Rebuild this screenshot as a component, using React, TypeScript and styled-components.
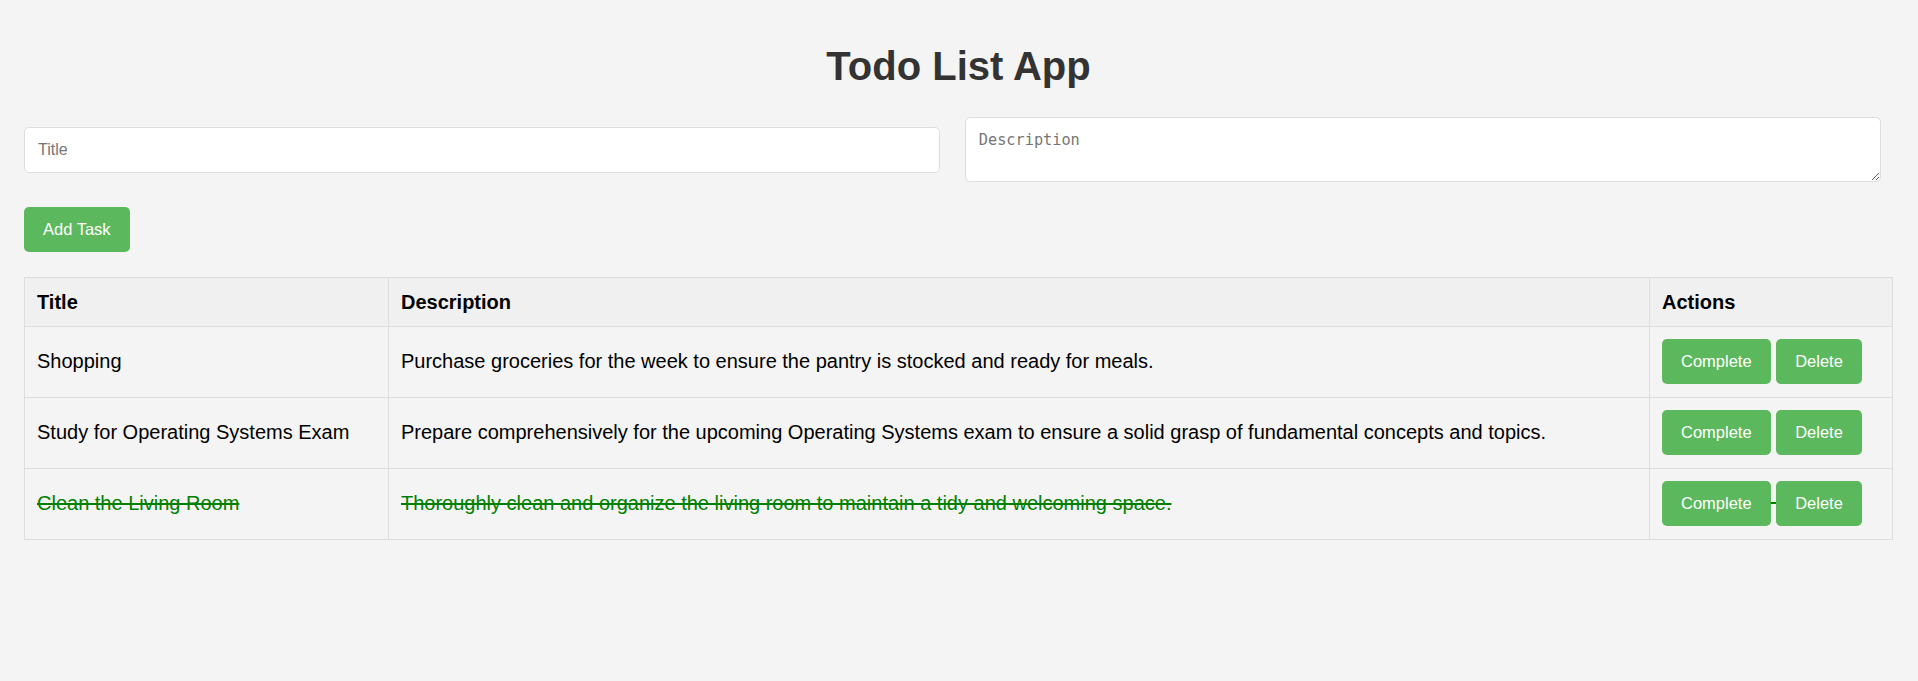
import React, { useState } from "react";
import styled, { createGlobalStyle } from "styled-components";

const GlobalStyle = createGlobalStyle`
  html, body {
    margin: 0;
    padding: 0;
    background: #f4f4f4;
  }
  body {
    font-family: "Liberation Sans", Arial, sans-serif;
    color: #000;
  }
`;

const Container = styled.div`
  padding: 24px 25px 24px 24px;
`;

const Heading = styled.h1`
  margin: 20px 0 29px;
  text-align: center;
  font-size: 40px;
  line-height: 44px;
  font-weight: bold;
  color: #333;
`;

const Form = styled.div`
  display: flex;
  align-items: center;
  gap: 25px;
`;

const TitleInput = styled.input`
  box-sizing: border-box;
  width: 49%;
  height: 46px;
  padding: 0 13px;
  border: 1px solid #ddd;
  border-radius: 5px;
  background: #fff;
  font-family: "Liberation Sans", Arial, sans-serif;
  font-size: 16px;
  outline: none;
  &::placeholder {
    color: #757575;
  }
`;

const DescArea = styled.textarea`
  box-sizing: border-box;
  width: 49%;
  height: 65px;
  padding: 13px;
  border: 1px solid #ddd;
  border-radius: 5px;
  background: #fff;
  font-family: "DejaVu Sans Mono", monospace;
  font-size: 15.25px;
  outline: none;
  &::placeholder {
    color: #757575;
  }
`;

const GreenButton = styled.button`
  display: inline-block;
  padding: 13px 19px;
  border: none;
  border-radius: 5px;
  background: #5cb85c;
  color: #fff;
  font-family: "Liberation Sans", Arial, sans-serif;
  font-size: 16.5px;
  line-height: 19px;
  cursor: pointer;
  text-decoration: none;
`;

const AddButton = styled(GreenButton)`
  margin-top: 25px;
  padding: 13px 19px;
`;

const Table = styled.table`
  margin-top: 25px;
  width: 100%;
  border-collapse: collapse;
  table-layout: fixed;
`;

const Col = styled.col<{ $w?: string }>`
  width: ${(p) => p.$w ?? "auto"};
`;

const HeadCell = styled.th`
  padding: 12px;
  border: 1px solid #ddd;
  background: #f0f0f0;
  text-align: left;
  font-size: 20px;
  font-weight: bold;
  line-height: 24px;
`;

const Cell = styled.td<{ $done?: boolean }>`
  padding: 12px 12px 13px;
  border: 1px solid #ddd;
  font-size: 20px;
  line-height: 23px;
  vertical-align: middle;
  color: ${(p) => (p.$done ? "#008000" : "#000")};
  text-decoration: ${(p) => (p.$done ? "line-through" : "none")};
`;

type Task = { id: number; title: string; description: string; done: boolean };

const initial: Task[] = [
  {
    id: 1,
    title: "Shopping",
    description:
      "Purchase groceries for the week to ensure the pantry is stocked and ready for meals.",
    done: false,
  },
  {
    id: 2,
    title: "Study for Operating Systems Exam",
    description:
      "Prepare comprehensively for the upcoming Operating Systems exam to ensure a solid grasp of fundamental concepts and topics.",
    done: false,
  },
  {
    id: 3,
    title: "Clean the Living Room",
    description:
      "Thoroughly clean and organize the living room to maintain a tidy and welcoming space.",
    done: true,
  },
];

export default function App() {
  const [tasks, setTasks] = useState<Task[]>(initial);
  const [title, setTitle] = useState("");
  const [desc, setDesc] = useState("");

  const add = () => {
    if (!title.trim()) return;
    setTasks([...tasks, { id: Date.now(), title, description: desc, done: false }]);
    setTitle("");
    setDesc("");
  };

  return (
    <>
      <GlobalStyle />
      <Container>
        <Heading>Todo List App</Heading>
        <Form>
          <TitleInput
            placeholder="Title"
            value={title}
            onChange={(e) => setTitle(e.target.value)}
          />
          <DescArea
            placeholder="Description"
            value={desc}
            onChange={(e) => setDesc(e.target.value)}
          />
        </Form>
        <AddButton onClick={add}>Add Task</AddButton>
        <Table>
          <colgroup>
            <Col $w="364px" />
            <Col />
            <Col $w="243px" />
          </colgroup>
          <thead>
            <tr>
              <HeadCell>Title</HeadCell>
              <HeadCell>Description</HeadCell>
              <HeadCell>Actions</HeadCell>
            </tr>
          </thead>
          <tbody>
            {tasks.map((t) => (
              <tr key={t.id}>
                <Cell $done={t.done}>{t.title}</Cell>
                <Cell $done={t.done}>{t.description}</Cell>
                <Cell $done={t.done}>
                  <GreenButton
                    onClick={() =>
                      setTasks(tasks.map((x) => (x.id === t.id ? { ...x, done: true } : x)))
                    }
                  >
                    Complete
                  </GreenButton>{" "}
                  <GreenButton onClick={() => setTasks(tasks.filter((x) => x.id !== t.id))}>
                    Delete
                  </GreenButton>
                </Cell>
              </tr>
            ))}
          </tbody>
        </Table>
      </Container>
    </>
  );
}
